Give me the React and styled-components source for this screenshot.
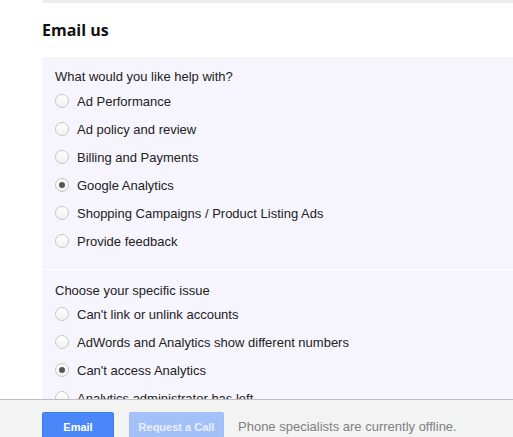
import React from "react";
import styled, { createGlobalStyle } from "styled-components";

const Global = createGlobalStyle`
  html, body { margin: 0; padding: 0; background: #ffffff; }
  body { font-family: "Liberation Sans", Arial, sans-serif; overflow: hidden; }
`;

const Page = styled.div`
  padding-left: 42px;
  height: 437px;
  overflow: hidden;
`;

const TopStrip = styled.div`
  height: 3px;
  background: #ededed;
`;

const Heading = styled.h2`
  margin: 0;
  padding: 16px 0 0;
  height: 38px;
  box-sizing: border-box;
  font-family: "Open Sans", sans-serif;
  font-weight: 700;
  font-size: 16px;
  line-height: 22px;
  color: #111;
`;

const Panel = styled.div`
  margin-top: 16px;
  background: #f6f5fd;
`;

const Section = styled.fieldset`
  margin: 0;
  border: 0;
  padding: ${(p) => (p.$divided ? "13px" : "12px")} 13px 14px;
  border-top: ${(p) => (p.$divided ? "1px solid #ffffff" : "0")};
`;

const Legend = styled.div`
  font-size: 13px;
  line-height: 16px;
  color: #222;
  margin-bottom: ${(p) => (p.$tight ? "1px" : "2px")};
`;

const Option = styled.label`
  display: flex;
  align-items: center;
  gap: 8px;
  height: 28px;
  font-size: 13px;
  color: #222;
  white-space: nowrap;
`;

const Radio = styled.span`
  width: 14px;
  height: 14px;
  box-sizing: border-box;
  border-radius: 50%;
  border: 1px solid #c6c6c6;
  background: linear-gradient(#ffffff, #f1f1f1);
  display: flex;
  align-items: center;
  justify-content: center;
  flex: none;
  &::after {
    content: "";
    width: 6px;
    height: 6px;
    border-radius: 50%;
    background: ${(p) => (p.$checked ? "#555555" : "transparent")};
  }
`;

const Footer = styled.div`
  position: fixed;
  left: 0;
  right: 0;
  bottom: 0;
  height: 38px;
  background: #f3f3f3;
  border-top: 1px solid #bdbdbd;
  display: flex;
  align-items: flex-start;
  gap: 15px;
  padding: 12px 0 0 42px;
  box-sizing: border-box;
`;

const Button = styled.button`
  height: 30px;
  width: ${(p) => p.$w}px;
  border: 1px solid ${(p) => (p.$disabled ? "#a0bdf7" : "#3f7cf0")};
  border-radius: 2px;
  background: ${(p) => (p.$disabled ? "#a3c0f9" : "#4a87f8")};
  color: ${(p) => (p.$disabled ? "#e9f0fe" : "#ffffff")};
  font-family: "Liberation Sans", Arial, sans-serif;
  font-weight: 700;
  font-size: 11px;
  padding: 0;
  flex: none;
  display: flex;
  align-items: center;
  justify-content: center;
`;

const Note = styled.span`
  font-size: 13px;
  color: #808080;
  line-height: 16px;
  margin-left: -1px;
  margin-top: 7px;
`;

const helpOptions = [
  ["Ad Performance", false],
  ["Ad policy and review", false],
  ["Billing and Payments", false],
  ["Google Analytics", true],
  ["Shopping Campaigns / Product Listing Ads", false],
  ["Provide feedback", false],
];

const issueOptions = [
  ["Can't link or unlink accounts", false],
  ["AdWords and Analytics show different numbers", false],
  ["Can't access Analytics", true],
  ["Analytics administrator has left", false],
  ["Other", false],
];

export default function App() {
  return (
    <>
      <Global />
      <Page>
        <TopStrip />
        <Heading>Email us</Heading>
        <Panel>
          <Section>
            <Legend>What would you like help with?</Legend>
            {helpOptions.map(([t, c]) => (
              <Option key={t}>
                <Radio $checked={c} />
                {t}
              </Option>
            ))}
          </Section>
          <Section $divided>
            <Legend $tight>Choose your specific issue</Legend>
            {issueOptions.map(([t, c]) => (
              <Option key={t}>
                <Radio $checked={c} />
                {t}
              </Option>
            ))}
          </Section>
        </Panel>
      </Page>
      <Footer>
        <Button $w={72}>Email</Button>
        <Button $w={95} $disabled>Request a Call</Button>
        <Note>Phone specialists are currently offline.</Note>
      </Footer>
    </>
  );
}
